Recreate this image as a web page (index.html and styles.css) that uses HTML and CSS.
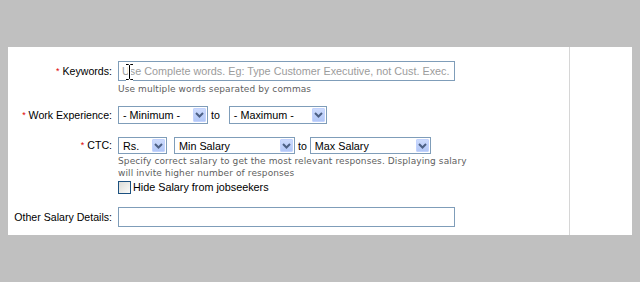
FILE: index.html
```html
<!DOCTYPE html>
<html>
<head>
<meta charset="utf-8">
<link rel="stylesheet" href="styles.css">
</head>
<body>
<div class="panel">
  <div class="main">
    <div class="row row-kw">
      <div class="label"><span class="req">*</span> Keywords:</div>
      <div class="field">
        <div class="text-input kw-input">
          <span class="placeholder">Use Complete words. Eg: Type Customer Executive, not Cust. Exec.</span>
          <svg class="ibeam" width="9" height="18" viewBox="0 0 9 18">
            <path d="M1 1.5h2.5l1 1 1-1H8M4.5 2.5v13M1 16.5h2.5l1-1 1 1H8" fill="none" stroke="#fff" stroke-width="3"/>
            <path d="M1 1.5h2.5l1 1 1-1H8M4.5 2.5v13M1 16.5h2.5l1-1 1 1H8" fill="none" stroke="#000" stroke-width="1"/>
          </svg>
        </div>
        <div class="hint">Use multiple words separated by commas</div>
      </div>
    </div>

    <div class="row row-exp">
      <div class="label"><span class="req">*</span> Work Experience:</div>
      <div class="field inline">
        <div class="select w-exp-min"><span class="sel-text">- Minimum -</span><span class="sel-btn"><svg width="9" height="6" viewBox="0 0 9 6"><path d="M1 1l3.5 3.5L8 1" fill="none" stroke="#4d6185" stroke-width="2"/></svg></span></div>
        <span class="to">to</span>
        <div class="select w-exp-max"><span class="sel-text">- Maximum -</span><span class="sel-btn"><svg width="9" height="6" viewBox="0 0 9 6"><path d="M1 1l3.5 3.5L8 1" fill="none" stroke="#4d6185" stroke-width="2"/></svg></span></div>
      </div>
    </div>

    <div class="row row-ctc">
      <div class="label"><span class="req">*</span> CTC:</div>
      <div class="field">
        <div class="inline">
          <div class="select short w-rs"><span class="sel-text">Rs.</span><span class="sel-btn"><svg width="9" height="6" viewBox="0 0 9 6"><path d="M1 1l3.5 3.5L8 1" fill="none" stroke="#4d6185" stroke-width="2"/></svg></span></div>
          <div class="select short w-sal gap-left"><span class="sel-text">Min Salary</span><span class="sel-btn"><svg width="9" height="6" viewBox="0 0 9 6"><path d="M1 1l3.5 3.5L8 1" fill="none" stroke="#4d6185" stroke-width="2"/></svg></span></div>
          <span class="to to-ctc">to</span>
          <div class="select short w-sal"><span class="sel-text">Max Salary</span><span class="sel-btn"><svg width="9" height="6" viewBox="0 0 9 6"><path d="M1 1l3.5 3.5L8 1" fill="none" stroke="#4d6185" stroke-width="2"/></svg></span></div>
        </div>
        <div class="hint hint-ctc">Specify correct salary to get the most relevant responses. Displaying salary<br>will invite higher number of responses</div>
        <label class="check-row"><span class="checkbox"></span>Hide Salary from jobseekers</label>
      </div>
    </div>

    <div class="row row-other">
      <div class="label">Other Salary Details:</div>
      <div class="field">
        <div class="text-input other-input"></div>
      </div>
    </div>
  </div>
  <div class="side"></div>
</div>
</body>
</html>
```
FILE: styles.css
```css
html, body {
  margin: 0;
  padding: 0;
}
body {
  background: #c0c0c0;
  font-family: "Liberation Sans", Arial, sans-serif;
  font-size: 10.6px;
  color: #000;
  padding: 47px 8px 0 8px;
  height: 282px;
  box-sizing: border-box;
}
.panel {
  background: #fff;
  height: 188px;
  display: flex;
}
.main {
  width: 562px;
  border-right: 1px solid #d6d6d6;
  padding-top: 14px;
  box-sizing: border-box;
}
.side {
  flex: 1;
}
.row {
  display: flex;
  align-items: flex-start;
}
.label {
  width: 104px;
  margin-right: 6px;
  text-align: right;
  line-height: 20px;
  white-space: nowrap;
}
.req {
  color: #e00000;
  font-size: 9px;
  vertical-align: 1px;
}
.field {
  display: flex;
  flex-direction: column;
  align-items: flex-start;
}
.inline {
  display: flex;
  flex-direction: row;
  align-items: center;
}
.text-input {
  position: relative;
  box-sizing: border-box;
  width: 337px;
  height: 20px;
  border: 1px solid #7f9db9;
  background: #fff;
  line-height: 18px;
  padding-left: 3px;
  white-space: nowrap;
  overflow: visible;
}
.placeholder {
  color: #9c9c9c;
  font-size: 10.8px;
}
.ibeam {
  position: absolute;
  left: 6px;
  top: 1px;
}
.hint {
  font-family: "DejaVu Sans", Verdana, sans-serif;
  font-size: 9px;
  letter-spacing: 0.1px;
  color: #5f5f5f;
  line-height: 12px;
  margin-top: 2px;
}
.row-exp {
  margin-top: 11px;
}
.row-exp .label {
  line-height: 18px;
}
.select {
  position: relative;
  box-sizing: border-box;
  height: 18px;
  border: 1px solid #7f9db9;
  background: #fff;
  display: flex;
  align-items: center;
  padding-left: 4px;
  white-space: nowrap;
}
.select.short {
  height: 17px;
}
.sel-text {
  flex: 1;
  line-height: 14px;
  font-size: 10.8px;
}
.sel-btn {
  box-sizing: border-box;
  width: 13px;
  align-self: stretch;
  margin: 1px 1px 1px 0;
  border: 1px solid #c3d3fd;
  border-radius: 1px;
  background: linear-gradient(#cddbfd, #b2c7f7);
  display: flex;
  align-items: center;
  justify-content: center;
}
.sel-btn svg {
  display: block;
}
.w-exp-min { width: 90px; }
.w-exp-max { width: 98px; }
.w-rs { width: 49px; }
.w-sal { width: 121px; }
.gap-left { margin-left: 7px; }
.to {
  margin: 0 9px 0 3px;
}
.to-ctc {
  margin: 0 3px 0 3px;
}
.row-ctc {
  margin-top: 13px;
}
.row-ctc .label {
  line-height: 17px;
}
.hint-ctc {
  margin-top: 1px;
}
.check-row {
  display: flex;
  align-items: center;
  height: 15px;
  margin-top: 1px;
  line-height: 15px;
  font-size: 10.8px;
}
.checkbox {
  box-sizing: border-box;
  width: 13px;
  height: 13px;
  border: 1px solid #1c5180;
  background: linear-gradient(135deg, #dcdcd7, #fbfbf9);
  margin-right: 2px;
}
.row-other {
  margin-top: 12px;
}
```
